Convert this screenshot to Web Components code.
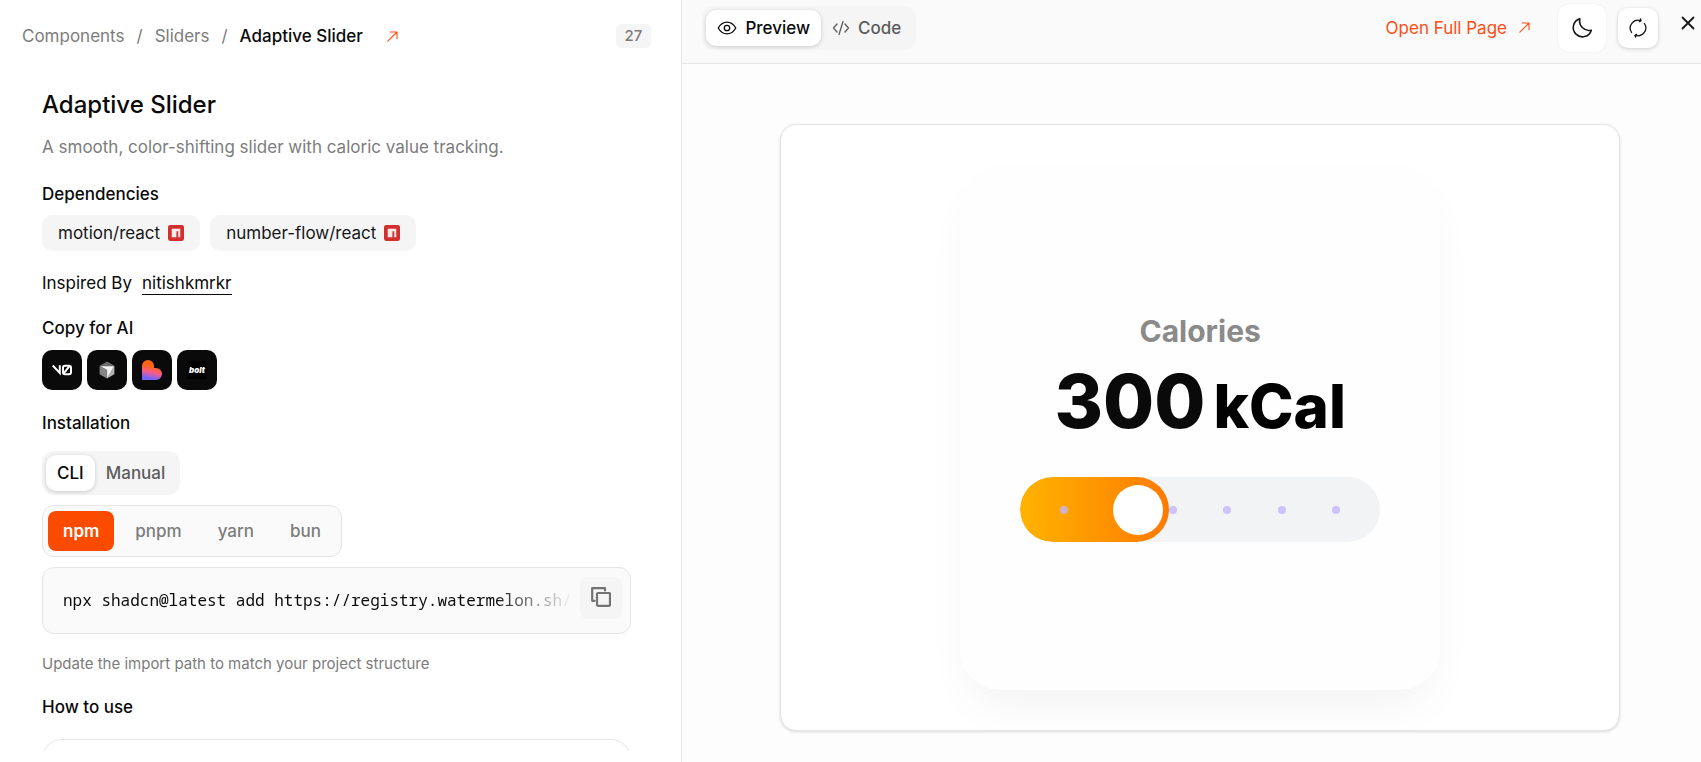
<!DOCTYPE html>
<html lang="en">
<head>
<meta charset="UTF-8">
<meta name="viewport" content="width=device-width, initial-scale=1.0">
<title>Adaptive Slider</title>
<style>
    body {
        margin: 0;
        font-family: Inter, "Liberation Sans", sans-serif;
        color: #0a0a0a;
        background: #fff;
    }
</style>
</head>
<body>
<app-page>
    <doc-panel slot="docs"></doc-panel>
    <preview-panel slot="preview">
        <calorie-slider label="Calories" unit="kCal" value="300"></calorie-slider>
    </preview-panel>
</app-page>

<script>
const arrowIcon = `<svg width="11" height="11" viewBox="0 0 11 11" fill="none" stroke="currentColor" stroke-width="1.1" stroke-linecap="round" stroke-linejoin="round" aria-hidden="true"><path d="M.8 10.200 10 1M3.200 1H10v6.800"/></svg>`;

class AppPage extends HTMLElement {
    shadowRoot = this.attachShadow({mode: 'open'});

    connectedCallback() {
        this.shadowRoot.innerHTML = `
        <style>
            :host {
                display: grid;
                grid-template-columns: calc(40% + 2px) minmax(0, 1fr);
                height: 100vh;
                overflow: hidden;
            }
        </style>
        <slot name="docs"></slot>
        <slot name="preview"></slot>
        `;
    }
}

customElements.define('app-page', AppPage);

class SegmentedTabs extends HTMLElement {
    shadowRoot = this.attachShadow({mode: 'open'});

    connectedCallback() {
        this.shadowRoot.innerHTML = `
        <style>
            :host {
                display: flex;
                width: fit-content;
                box-sizing: border-box;
                padding: 4px;
                border-radius: 12px;
                background: #f5f5f5;
            }

            ::slotted(button) {
                display: flex;
                align-items: center;
                gap: 8px;
                height: 36px;
                padding: 0 11px;
                border: 0;
                border-radius: 10px;
                background: none;
                font: 500 17px/28px Inter, sans-serif;
                color: #5c5c5c;
            }

            ::slotted(button[aria-pressed="true"]) {
                background: #fff;
                color: #0a0a0a;
                box-shadow: 0 1px 4px rgba(0, 0, 0, 0.18);
            }
        </style>
        <slot></slot>
        `;
    }
}

customElements.define('segmented-tabs', SegmentedTabs);

class DependencyChip extends HTMLElement {
    shadowRoot = this.attachShadow({mode: 'open'});

    connectedCallback() {
        this.shadowRoot.innerHTML = `
        <style>
            :host {
                display: block;
            }

            a {
                display: flex;
                align-items: center;
                gap: 8px;
                height: 36px;
                padding: 0 16px;
                border-radius: 10px;
                background: #f5f5f5;
                color: #171717;
                font-size: 17px;
                text-decoration: none;
            }
        </style>
        <a href="#">
            <slot></slot>
            <svg width="16" height="16" viewBox="0 0 15 15" aria-hidden="true">
                <rect width="15" height="15" rx="2" fill="#d32f2f"/>
                <path d="M3.500 3.500h8v8H9.600V5.800H7.900v5.700H3.500z" fill="#fff" opacity=".9"/>
            </svg>
        </a>
        `;
    }
}

customElements.define('dependency-chip', DependencyChip);

class CommandBox extends HTMLElement {
    shadowRoot = this.attachShadow({mode: 'open'});

    connectedCallback() {
        this.shadowRoot.innerHTML = `
        <style>
            :host {
                display: flex;
                align-items: flex-start;
                gap: 6px;
                box-sizing: border-box;
                height: 67px;
                padding: 9px 8px 9px 20px;
                border: 1px solid #e5e5e5;
                border-radius: 12px;
                background: #fafafa;
            }

            code {
                flex: 1;
                min-width: 0;
                overflow: hidden;
                white-space: nowrap;
                font: 16px/46px Consolas, "Noto Sans Mono", "Liberation Mono", monospace;
                mask-image: linear-gradient(to right, #000 84%, transparent);
            }

            button {
                display: grid;
                place-items: center;
                width: 42px;
                height: 42px;
                padding: 0 0 2px;
                border: 0;
                border-radius: 8px;
                background: #f5f5f5;
                color: #737373;
            }
        </style>
        <code><slot></slot></code>
        <button type="button" aria-label="Copy command">
            <svg width="20" height="20" viewBox="0 0 20 20" fill="none" stroke="currentColor" stroke-width="2.200" stroke-linejoin="round"><rect x="6" y="6" width="13" height="12.800" rx="1"/><path d="M3.600 13.800H1.200V1.200H14v2.300" stroke-linecap="round"/></svg>
        </button>
        `;
    }
}

customElements.define('command-box', CommandBox);

class DocPanel extends HTMLElement {
    shadowRoot = this.attachShadow({mode: 'open'});

    connectedCallback() {
        this.shadowRoot.innerHTML = `
        <style>
            :host {
                display: flex;
                flex-direction: column;
                box-sizing: border-box;
                min-height: 0;
                padding-bottom: 11px;
                border-right: 1px solid #e5e5e5;
            }

            header {
                display: flex;
                align-items: center;
                justify-content: space-between;
                padding: 22px 30px 0 22px;
                font-size: 17px;
                line-height: 28px;
                color: #7c7c7c;
            }

            nav {
                display: flex;
                gap: 12px;
            }

            nav a {
                color: inherit;
                text-decoration: none;
            }

            nav a[aria-current] {
                color: #0a0a0a;
                font-weight: 500;
            }

            nav .open {
                margin-left: 12px;
                color: #ff4d14;
            }

            .count {
                padding: 0 9px;
                border-radius: 6px;
                background: #f5f5f5;
                font-size: 15px;
                line-height: 24px;
                font-weight: 500;
            }

            main {
                flex: 1;
                min-height: 0;
                overflow: hidden;
                padding: 37px 50px 0 42px;
            }

            h1 {
                margin: 0 0 10px;
                font-size: 24px;
                line-height: 36px;
                font-weight: 500;
            }

            h2 {
                margin: 0;
                font-size: 17px;
                line-height: 28px;
                font-weight: 500;
            }

            p {
                margin: 0 0 19px;
                font-size: 17px;
                line-height: 28px;
                color: #7c7c7c;
            }

            .row {
                display: flex;
                gap: 10px;
            }

            .chips {
                margin: 7px 0 18px;
            }

            .inspired {
                margin-bottom: 17px;
                font-size: 17px;
                line-height: 28px;
            }

            .inspired a {
                box-sizing: border-box;
                height: 26px;
                border-bottom: 1px solid #0a0a0a;
                color: inherit;
                text-decoration: none;
            }

            .ai {
                gap: 5px;
                margin: 8px 0 19px;
            }

            .ai button {
                display: grid;
                place-items: center;
                width: 40px;
                height: 40px;
                padding: 0;
                border: 0;
                border-radius: 10px;
                background: #0a0a0a;
            }

            .bolt {
                padding: 0 2px;
                background: #000;
                color: #fff;
                font: italic 900 8px/18px Inter, sans-serif;
            }

            segmented-tabs {
                margin: 14px 0 10px;
            }

            .managers {
                display: flex;
                gap: 6px;
                width: fit-content;
                margin-bottom: 10px;
                padding: 5px;
                border: 1px solid #e5e5e5;
                border-radius: 12px;
                background: #fafafa;
            }

            .managers button {
                height: 40px;
                padding: 0 15px;
                border: 0;
                border-radius: 8px;
                background: none;
                font: 500 17px/28px Inter, sans-serif;
                color: #7c7c7c;
            }

            .managers button[aria-pressed="true"] {
                background: #fb4b00;
                color: #fff;
                font-weight: 600;
            }

            .note {
                margin: 16px 0 15px;
                font-size: 15px;
            }

            .usage {
                height: 120px;
                margin-top: 18px;
                border: 1px solid #e5e5e5;
                border-radius: 20px;
            }
        </style>
        <header>
            <nav aria-label="Breadcrumb">
                <a href="#">Components</a>
                <span>/</span>
                <a href="#">Sliders</a>
                <span>/</span>
                <a href="#" aria-current="page">Adaptive Slider</a>
                <a class="open" href="#" aria-label="Open component">${arrowIcon}</a>
            </nav>
            <span class="count">27</span>
        </header>
        <main>
            <h1>Adaptive Slider</h1>
            <p>A smooth, color-shifting slider with caloric value tracking.</p>
            <h2>Dependencies</h2>
            <div class="row chips">
                <dependency-chip>motion/react</dependency-chip>
                <dependency-chip>number-flow/react</dependency-chip>
            </div>
            <div class="row inspired"><span>Inspired By</span><a href="#">nitishkmrkr</a></div>
            <h2>Copy for AI</h2>
            <div class="row ai">
                <button type="button" aria-label="Copy for v0">
                    <svg width="20" height="12" viewBox="0 0 20 12" fill="none" stroke="#fff" stroke-width="2"><path d="M.7 1.500 7.800 9V1.200M17.500 2.200 11.500 9.600"/><rect x="11" y="1.800" width="8" height="8.400" rx="2"/></svg>
                </button>
                <button type="button" aria-label="Copy for Cursor">
                    <svg width="16" height="18" viewBox="0 0 16 18"><path d="M8 .5 15.400 4.700 8 9 .6 4.700z" fill="#6b6b6b"/><path d="M.6 4.700 8 9v8.500L.6 13.200z" fill="#858585"/><path d="M15.400 4.700v8.500L8 17.500V9z" fill="#b0b0b0"/><path d="M1.500 5.200h13.200L8.300 16.200V9z" fill="#f4f4f4"/></svg>
                </button>
                <button type="button" aria-label="Copy for Lovable">
                    <svg width="20" height="20" viewBox="0 0 20 20"><defs><linearGradient id="heart" x1=".55" y1=".1" x2=".35" y2="1"><stop offset=".25" stop-color="#ff6318"/><stop offset=".55" stop-color="#fc5c85"/><stop offset=".9" stop-color="#7765f6"/></linearGradient></defs><path d="M0 20V6a6 6 0 0 1 12 0v2h2a6 6 0 0 1 0 12z" fill="url(#heart)"/></svg>
                </button>
                <button type="button" aria-label="Copy for Bolt"><span class="bolt">bolt</span></button>
            </div>
            <h2>Installation</h2>
            <segmented-tabs>
                <button type="button" aria-pressed="true">CLI</button>
                <button type="button" aria-pressed="false">Manual</button>
            </segmented-tabs>
            <div class="managers">
                <button type="button" aria-pressed="true">npm</button>
                <button type="button" aria-pressed="false">pnpm</button>
                <button type="button" aria-pressed="false">yarn</button>
                <button type="button" aria-pressed="false">bun</button>
            </div>
            <command-box>npx shadcn@latest add https://registry.watermelon.sh/</command-box>
            <p class="note">Update the import path to match your project structure</p>
            <h2>How to use</h2>
            <div class="usage"></div>
        </main>
        `;
    }
}

customElements.define('doc-panel', DocPanel);

class PreviewPanel extends HTMLElement {
    shadowRoot = this.attachShadow({mode: 'open'});

    connectedCallback() {
        this.shadowRoot.innerHTML = `
        <style>
            :host {
                display: flex;
                flex-direction: column;
                min-height: 0;
                background: #fdfdfd;
            }

            header {
                display: flex;
                align-items: center;
                justify-content: space-between;
                box-sizing: border-box;
                height: 64px;
                padding: 0 3px 8px 20px;
                border-bottom: 1px solid #e5e5e5;
                background: #fafafa;
            }

            .actions {
                display: flex;
                align-items: center;
            }

            .actions a {
                display: flex;
                align-items: center;
                gap: 12px;
                margin-right: 28px;
                color: #ff4d14;
                font-size: 17px;
                line-height: 28px;
                text-decoration: none;
            }

            .actions button {
                display: grid;
                place-items: center;
                padding: 0;
                border: 0;
                border-radius: 10px;
                background: #fff;
                color: #171717;
            }

            .actions .theme {
                width: 48px;
                height: 48px;
                margin-right: 12px;
                border-radius: 12px;
                box-shadow: 0 0 2px rgba(0, 0, 0, 0.08);
            }

            .actions .reload {
                width: 40px;
                height: 40px;
                margin-right: 20px;
                box-shadow: 0 1px 4px rgba(0, 0, 0, 0.18);
            }

            .actions .close {
                width: 20px;
                height: 20px;
                margin-bottom: 9px;
                background: none;
            }

            .stage {
                flex: 1;
                display: flex;
                min-height: 0;
                padding: 60px 81px 31px 98px;
            }

            .canvas {
                flex: 1;
                display: grid;
                place-items: center;
                overflow: hidden;
                border: 1px solid #e5e5e5;
                border-radius: 16px;
                background: #fff;
                box-shadow: 0 1px 3px rgba(0, 0, 0, 0.15);
            }
        </style>
        <header>
            <segmented-tabs>
                <button type="button" aria-pressed="true"><svg width="20" height="16" viewBox="0 0 20 16" fill="none" stroke="currentColor" stroke-width="1.300" aria-hidden="true"><path d="M1.200 8C5.800 .2 14.200 .2 18.800 8 14.200 15.800 5.800 15.800 1.200 8z" stroke-linejoin="round"/><circle cx="10" cy="8" r="2.700"/></svg>Preview</button>
                <button type="button" aria-pressed="false"><svg width="18" height="16" viewBox="0 0 18 16" fill="none" stroke="currentColor" stroke-width="1.300" stroke-linecap="round" stroke-linejoin="round" aria-hidden="true"><path d="M5 4 1.500 8 5 12M13 4l3.500 4L13 12M11 1.500 7 14.500"/></svg>Code</button>
            </segmented-tabs>
            <div class="actions">
                <a href="#">Open Full Page ${arrowIcon}</a>
                <button class="theme" type="button" aria-label="Toggle theme">
                    <svg width="22" height="22" viewBox="0 0 22 22" fill="none" stroke="currentColor" stroke-width="1.600" stroke-linejoin="round"><path d="M8.800 1.800A9.200 9.200 0 1 0 20.300 13.200C13.500 14.800 7.500 9 8.800 1.800z"/></svg>
                </button>
                <button class="reload" type="button" aria-label="Reload preview">
                    <svg width="20" height="22" viewBox="0 0 20 22" fill="none" stroke="currentColor" stroke-width="1.300" stroke-linecap="round" stroke-linejoin="round"><path d="M3.600 15.500A7.900 7.900 0 0 1 12.700 3.600M16.400 6.500A7.900 7.900 0 0 1 7.300 18.400"/><path d="M12.400 1.800 13 3.700 11.400 4.600M7.600 20.200 7 18.300 8.600 17.400"/></svg>
                </button>
                <button class="close" type="button" aria-label="Close">
                    <svg width="14" height="14" viewBox="0 0 14 14" fill="none" stroke="currentColor" stroke-width="1.800" stroke-linecap="round"><path d="m1.500 1.500 11 11m0-11-11 11"/></svg>
                </button>
            </div>
        </header>
        <div class="stage">
            <div class="canvas"><slot></slot></div>
        </div>
        `;
    }
}

customElements.define('preview-panel', PreviewPanel);

class CalorieSlider extends HTMLElement {
    shadowRoot = this.attachShadow({mode: 'open'});

    connectedCallback() {
        const label = this.getAttribute('label');
        const value = this.getAttribute('value');

        this.shadowRoot.innerHTML = `
        <style>
            :host {
                display: flex;
                flex-direction: column;
                align-items: center;
                justify-content: center;
                box-sizing: border-box;
                width: 480px;
                height: 524px;
                border-radius: 40px;
                background: #fefefe;
                box-shadow: 0 24px 48px -12px rgba(0, 0, 0, 0.06);
            }

            label {
                color: #8a8a8a;
                font-size: 30px;
                line-height: 36px;
                font-weight: 700;
            }

            output {
                display: flex;
                align-items: baseline;
                gap: 8px;
                margin: 12px 0 31px;
                font-size: 74px;
                line-height: 80px;
                font-weight: 800;
            }

            .unit {
                color: #000;
                font-size: 60px;
            }

            .track {
                display: grid;
                width: 360px;
                height: 65px;
                border-radius: 33px;
                overflow: hidden;
                background: #f1f3f5;
            }

            .track > * {
                grid-area: 1 / 1;
            }

            .fill {
                width: 149px;
                border-radius: 33px;
                background: linear-gradient(to right, #ffb300, #ff7a00);
            }

            .dots {
                display: flex;
                align-items: center;
                justify-content: space-between;
                padding: 0 40px;
            }

            .dots i {
                width: 8px;
                height: 8px;
                border-radius: 50%;
                background: rgba(196, 181, 253, 0.8);
            }

            input {
                appearance: none;
                width: 100%;
                height: 100%;
                margin: 0;
                box-sizing: border-box;
                padding: 0 7px;
                background: none;
            }

            input::-webkit-slider-thumb {
                appearance: none;
                width: 50px;
                height: 50px;
                border-radius: 50%;
                background: #fff;
            }
        </style>
        <label for="range">${label}</label>
        <output for="range"><span>${value}</span><span class="unit">${this.getAttribute('unit')}</span></output>
        <div class="track">
            <div class="fill"></div>
            <div class="dots"><i></i><i></i><i></i><i></i><i></i><i></i></div>
            <input id="range" type="range" min="0" max="1040" value="${value}">
        </div>
        `;
    }
}

customElements.define('calorie-slider', CalorieSlider);
</script>
</body>
</html>
